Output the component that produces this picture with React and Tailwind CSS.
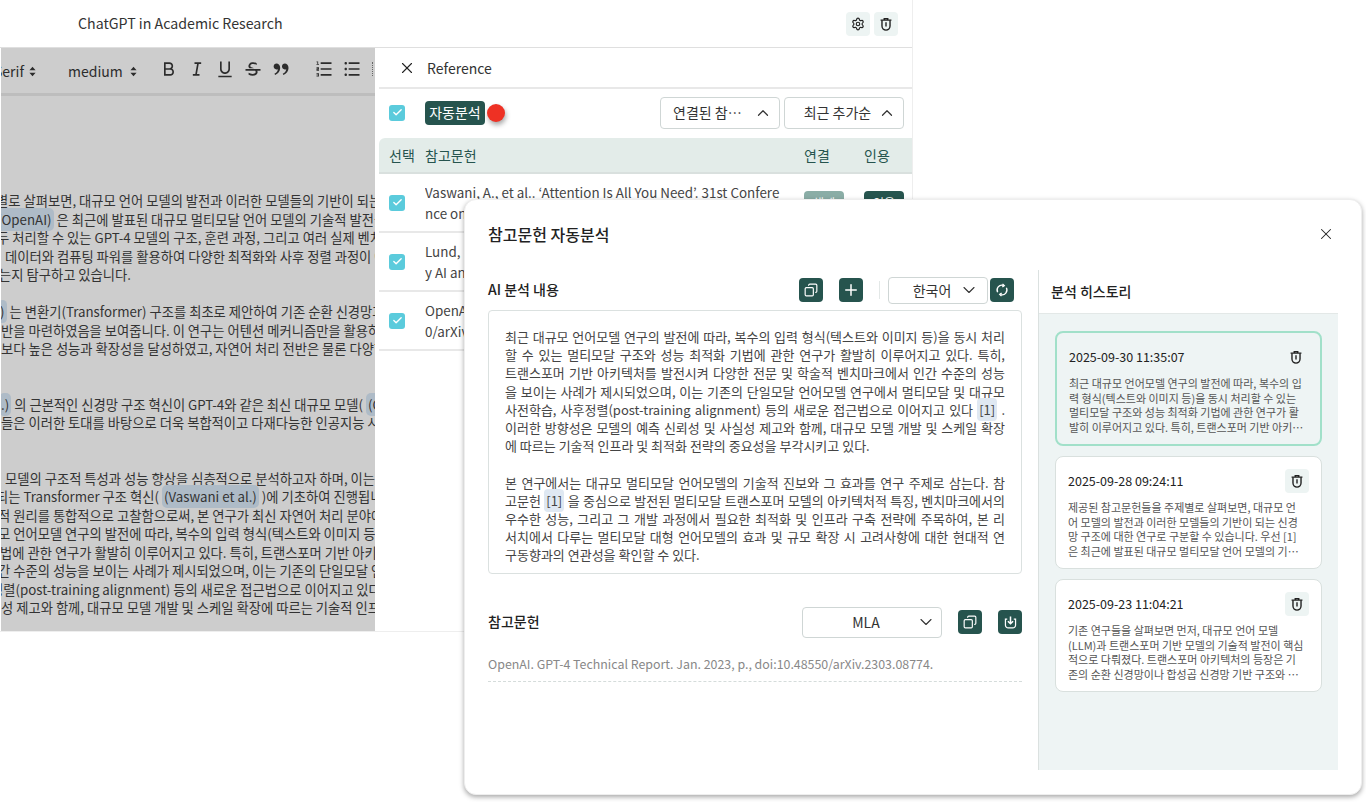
import { Check, ChevronDown, ChevronUp, Copy, Plus, Settings, X } from 'lucide-react';
import {
  RiBold,
  RiDoubleQuotesR,
  RiItalic,
  RiListOrdered,
  RiListUnordered,
  RiStrikethrough,
  RiUnderline,
} from 'react-icons/ri';

const FONT = "font-['Noto_Sans_CJK_KR','Noto_Sans',sans-serif]";

const ANALYSIS = [
  [
    '최근 대규모 언어모델 연구의 발전에 따라, 복수의 입력 형식(텍스트와 이미지 등)을 동시 처리',
    '할 수 있는 멀티모달 구조와 성능 최적화 기법에 관한 연구가 활발히 이루어지고 있다. 특히,',
    '트랜스포머 기반 아키텍처를 발전시켜 다양한 전문 및 학술적 벤치마크에서 인간 수준의 성능',
    '을 보이는 사례가 제시되었으며, 이는 기존의 단일모달 언어모델 연구에서 멀티모달 및 대규모',
    <>
      사전학습, 사후정렬(post-training alignment) 등의 새로운 접근법으로 이어지고 있다 <Cite /> .
    </>,
    '이러한 방향성은 모델의 예측 신뢰성 및 사실성 제고와 함께, 대규모 모델 개발 및 스케일 확장',
  ],
  [
    '본 연구에서는 대규모 멀티모달 언어모델의 기술적 진보와 그 효과를 연구 주제로 삼는다. 참',
    <>
      고문헌 <Cite /> 을 중심으로 발전된 멀티모달 트랜스포머 모델의 아키텍처적 특징, 벤치마크에서의
    </>,
    '우수한 성능, 그리고 그 개발 과정에서 필요한 최적화 및 인프라 구축 전략에 주목하여, 본 리',
    '서치에서 다루는 멀티모달 대형 언어모델의 효과 및 규모 확장 시 고려사항에 대한 현대적 연',
  ],
];

const HISTORY = [
  {
    date: '2025-09-30 11:35:07',
    active: true,
    lines: [
      '최근 대규모 언어모델 연구의 발전에 따라, 복수의 입',
      '력 형식(텍스트와 이미지 등)을 동시 처리할 수 있는',
      '멀티모달 구조와 성능 최적화 기법에 관한 연구가 활',
      '발히 이루어지고 있다. 특히, 트랜스포머 기반 아키…',
    ],
  },
  {
    date: '2025-09-28 09:24:11',
    lines: [
      '제공된 참고문헌들을 주제별로 살펴보면, 대규모 언',
      '어 모델의 발전과 이러한 모델들의 기반이 되는 신경',
      '망 구조에 대한 연구로 구분할 수 있습니다. 우선 [1]',
      '은 최근에 발표된 대규모 멀티모달 언어 모델의 기…',
    ],
  },
  {
    date: '2025-09-23 11:04:21',
    lines: [
      '기존 연구들을 살펴보면 먼저, 대규모 언어 모델',
      '(LLM)과 트랜스포머 기반 모델의 기술적 발전이 핵심',
      '적으로 다뤄졌다. 트랜스포머 아키텍처의 등장은 기',
      '존의 순환 신경망이나 합성곱 신경망 기반 구조와 …',
    ],
  },
];

const REFS = [
  ['Vaswani, A., et al.. ‘Attention Is All You Need’. 31st Confere', 'nce on Neural Information Processing'],
  ['Lund, Brady D., et al.. ‘ChatGPT and a New Academic Realit', 'y AI and Libraries'],
  ['OpenAI. GPT-4 Technical Report. Jan. 2023, p., doi:10.4855', '0/arXiv.2303.08774'],
];

function Cite() {
  return <span className="rounded-sm bg-[#dfe8f2] px-[2px] py-[2px]">[1]</span>;
}

function Chip({ children }) {
  return <span className="rounded-[5px] bg-[#aebbc7] px-[2px] py-[2px]">{children}</span>;
}

function TrashIcon({ className = 'h-[14px] w-[14px]' }) {
  return (
    <svg viewBox="0 0 16 16" fill="none" stroke="currentColor" strokeWidth="1.6" className={className}>
      <path d="M1.8 3.6h12.4M6 3.4V1.8h4v1.6" />
      <path d="M3.4 3.8v6.6a4.6 4.6 0 0 0 9.2 0V3.8" />
      <path d="M8 6v4.8" />
    </svg>
  );
}

function DownloadIcon() {
  return (
    <svg viewBox="0 0 16 16" fill="none" stroke="currentColor" strokeWidth="1.3" className="h-[15px] w-[15px]">
      <path d="M8 1.5v7.5M5.2 6.6 8 9.4l2.8-2.8" strokeWidth="1.6" />
      <path d="M4.5 4.5H2.6v6.3a3 3 0 0 0 3 3h4.8a3 3 0 0 0 3-3V4.5h-1.9" />
    </svg>
  );
}

function RefreshIcon() {
  return (
    <svg viewBox="0 0 16 16" fill="none" stroke="currentColor" strokeWidth="1.5" className="h-[14px] w-[14px]">
      <path d="M3 10.5A5.5 5.5 0 0 1 9.5 2.7" />
      <path d="M13 5.5a5.5 5.5 0 0 1-6.5 7.8" />
      <path d="M8.6 1 10.6 3 8.4 4.6M7.4 15l-2-2 2.2-1.6" />
    </svg>
  );
}

function SortCaret() {
  return (
    <svg viewBox="0 0 8 12" fill="currentColor" className="h-[11px] w-[7px]">
      <path d="M4 0.5 7.5 4.6H.5zM4 11.5.5 7.4h7z" />
    </svg>
  );
}

function DarkButton({ children }) {
  return (
    <button className="flex h-[24px] w-[24px] items-center justify-center rounded-[4px] bg-[#26544e] text-white">
      {children}
    </button>
  );
}

function LightButton({ children }) {
  return (
    <button className="flex h-[24px] w-[24px] items-center justify-center rounded-[4px] bg-[#edf4f3] text-[#222]">
      {children}
    </button>
  );
}

function CheckBox() {
  return (
    <span className="flex h-[16px] w-[16px] items-center justify-center rounded-[3px] bg-[#5bcbdc] text-white">
      <Check size={11} strokeWidth={3} />
    </span>
  );
}

function SelectBox({ label, className, up }) {
  return (
    <div className={`flex items-center rounded-[4px] border border-[#cfd6d5] bg-white text-[#333] ${className}`}>
      <span className="flex-1 truncate text-center">{label}</span>
      {up ? <ChevronUp size={18} strokeWidth={1.6} /> : <ChevronDown size={20} strokeWidth={1.3} />}
    </div>
  );
}

function Line({ offset, children }) {
  return <div className={`whitespace-nowrap ${offset}`}>{children}</div>;
}

function Editor() {
  return (
    <div className="ml-px h-full w-[374px] shrink-0 overflow-hidden bg-[#cdcdcd]">
      <div className="flex h-[48px] items-center border-b-[3px] border-[#bdbdbd] text-[14px] text-[#2c2c2c]">
        <div className="ml-[-7px] flex w-[44px] shrink-0 items-center gap-[5px] pt-[2px]">
          <span>Serif</span>
          <SortCaret />
        </div>
        <div className="ml-[30px] flex shrink-0 items-center gap-[7px] pt-[2px]">
          <span>medium</span>
          <SortCaret />
        </div>
        <div className="ml-[22px] mb-[4px] flex items-center gap-[8px]">
          <RiBold size={20} />
          <RiItalic size={20} />
          <RiUnderline size={20} />
          <RiStrikethrough size={20} />
          <RiDoubleQuotesR size={20} />
          <RiListOrdered size={20} className="ml-[15px]" />
          <RiListUnordered size={20} />
          <span className="ml-[2px] h-[14px] border-l border-dotted border-[#666]" />
        </div>
      </div>
      <div className="pt-[96px] text-[13.3px] leading-[18.5px] text-[#333]">
        <Line offset="ml-[-5px]">별로 살펴보면, 대규모 언어 모델의 발전과 이러한 모델들의 기반이 되는 신경망</Line>
        <Line offset="ml-[-6px]">
          <Chip>(OpenAI)</Chip> 은 최근에 발표된 대규모 멀티모달 언어 모델의 기술적 발전을
        </Line>
        <Line offset="ml-[-4px]">두 처리할 수 있는 GPT-4 모델의 구조, 훈련 과정, 그리고 여러 실제 벤치마크</Line>
        <Line offset="ml-[4px]">데이터와 컴퓨팅 파워를 활용하여 다양한 최적화와 사후 정렬 과정이 어떻게</Line>
        <Line offset="ml-[-2px]">는지 탐구하고 있습니다.</Line>
        <div className="h-[18.5px]" />
        <Line offset="ml-[-3px]">
          <Chip>)</Chip> 는 변환기(Transformer) 구조를 최초로 제안하여 기존 순환 신경망과
        </Line>
        <Line offset="ml-[0px]">반을 마련하였음을 보여줍니다. 이 연구는 어텐션 메커니즘만을 활용하여</Line>
        <Line offset="ml-[0px]">보다 높은 성능과 확장성을 달성하였고, 자연어 처리 전반은 물론 다양한</Line>
        <div className="h-[37px]" />
        <Line offset="ml-[-2px]">
          <Chip>.)</Chip> 의 근본적인 신경망 구조 혁신이 GPT-4와 같은 최신 대규모 모델( <Chip>(OpenAI)</Chip>
        </Line>
        <Line offset="ml-[0px]">들은 이러한 토대를 바탕으로 더욱 복합적이고 다재다능한 인공지능 시스템</Line>
        <div className="h-[37px]" />
        <Line offset="ml-[4px]">모델의 구조적 특성과 성능 향상을 심층적으로 분석하고자 하며, 이는</Line>
        <Line offset="ml-[-5px]">
          되는 Transformer 구조 혁신( <Chip>(Vaswani et al.)</Chip> )에 기초하여 진행됩니다
        </Line>
        <Line offset="ml-[-3px]">적 원리를 통합적으로 고찰함으로써, 본 연구가 최신 자연어 처리 분야에</Line>
        <Line offset="ml-[-3px]">모 언어모델 연구의 발전에 따라, 복수의 입력 형식(텍스트와 이미지 등)</Line>
        <Line offset="ml-[-1px]">법에 관한 연구가 활발히 이루어지고 있다. 특히, 트랜스포머 기반 아키텍처</Line>
        <Line offset="ml-[-3px]">간 수준의 성능을 보이는 사례가 제시되었으며, 이는 기존의 단일모달 언어</Line>
        <Line offset="ml-[-10px]">정렬(post-training alignment) 등의 새로운 접근법으로 이어지고 있다</Line>
        <Line offset="ml-[0px]">성 제고와 함께, 대규모 모델 개발 및 스케일 확장에 따르는 기술적 인프라</Line>
      </div>
    </div>
  );
}

function ReferencePanel() {
  return (
    <div className="min-w-0 flex-1 pl-[4px] text-[14px] text-[#333]">
      <div className="flex h-[41px] items-center gap-[11px] border-b-2 border-[#e8e8e8] pl-[19px]">
        <X size={18} strokeWidth={1.5} className="text-[#222]" />
        <span className="pt-[2px]">Reference</span>
      </div>
      <div className="flex h-[49px] items-center pb-[2px] pl-[10px] pr-[8px]">
        <CheckBox />
        <span className="ml-[20px] flex h-[24px] w-[60px] items-center justify-center rounded-[4px] bg-[#26544e] text-white">
          자동분석
        </span>
        <span className="ml-[2px] h-[18px] w-[18px] rounded-full bg-[#ee3124] shadow-[1px_3px_5px_rgba(0,0,0,0.35)]" />
        <div className="ml-auto flex gap-[4px]">
          <SelectBox label="연결된 참고문헌" up className="h-[32px] w-[120px] pl-[12px] pr-[7px]" />
          <SelectBox label="최근 추가순" up className="h-[32px] w-[120px] pl-[12px] pr-[7px]" />
        </div>
      </div>
      <div className="flex h-[36px] items-center rounded-tl-[6px] border-b-2 border-[#d9e0de] bg-[#e3ece9] pl-[10px] text-[#26544e]">
        <span className="w-[36px]">선택</span>
        <span className="flex-1">참고문헌</span>
        <span className="w-[60px]">연결</span>
        <span className="w-[48px]">인용</span>
      </div>
      {REFS.map((ref) => (
        <div key={ref[0]} className="flex h-[59px] items-center border-b-2 border-[#e8e8e8] pl-[10px]">
          <CheckBox />
          <div className="ml-[20px] w-[379px] overflow-hidden whitespace-nowrap text-[13.4px] leading-[21px] text-[#444]">
            <div>{ref[0]}</div>
            <div>{ref[1]}</div>
          </div>
          <span className="flex h-[24px] w-[40px] items-center justify-center rounded-[4px] bg-[#8aada6] text-[12px] text-white">
            해제
          </span>
          <span className="ml-[20px] flex h-[24px] w-[40px] items-center justify-center rounded-[4px] bg-[#26544e] text-[12px] text-white">
            인용
          </span>
        </div>
      ))}
    </div>
  );
}

function HistoryCard({ item }) {
  return (
    <div
      className={`rounded-[8px] px-[12px] pt-[12px] ${
        item.active ? 'h-[115px] border-2 border-[#a1e0c9] bg-[#eef4f4]' : 'h-[113px] border border-[#d9e0de] bg-white'
      }`}
    >
      <div className="flex h-[24px] items-center justify-between">
        <span className="text-[12.5px] text-[#222]">{item.date}</span>
        {item.active ? (
          <span className="flex h-[24px] w-[24px] items-center justify-center text-[#222]">
            <TrashIcon />
          </span>
        ) : (
          <LightButton>
            <TrashIcon />
          </LightButton>
        )}
      </div>
      <div className="mt-[7px] whitespace-nowrap text-[11px] leading-[14.7px] text-[#555]">
        {item.lines.map((line) => (
          <div key={line}>{line}</div>
        ))}
      </div>
    </div>
  );
}

function AnalysisModal() {
  return (
    <div className="absolute left-[464px] top-[199px] h-[596px] w-[898px] rounded-[12px] border border-[#eeeeee] bg-white shadow-[0_2px_5px_rgba(0,0,0,0.35)]">
      <div className="flex h-[70px] items-center justify-between pb-[3px] pl-[23px] pr-[26px]">
        <span className="text-[16px] font-medium text-[#222]">참고문헌 자동분석</span>
        <X size={18} strokeWidth={1.4} className="text-[#222]" />
      </div>
      <div className="flex h-[500px]">
        <div className="ml-[23px] w-[534px]">
          <div className="flex h-[40px] items-center text-[14px]">
            <span className="pb-[2px] font-medium text-[#222]">AI 분석 내용</span>
            <div className="ml-auto flex items-center">
              <DarkButton>
                <Copy size={14} className="-scale-x-100" />
              </DarkButton>
              <div className="ml-[16px]">
                <DarkButton>
                  <Plus size={18} />
                </DarkButton>
              </div>
              <div className="ml-[16px] h-[18px] w-px bg-[#e3e8e7]" />
              <SelectBox label="한국어" className="ml-[8px] h-[27px] w-[100px] pl-[16px] pr-[8px]" />
              <div className="mx-[8px] ml-[2px]">
                <DarkButton>
                  <RefreshIcon />
                </DarkButton>
              </div>
            </div>
          </div>
          <div className="h-[264px] rounded-[4px] border border-[#dbe1e0] px-[16px] pt-[17px] text-[13px] leading-[18.2px] text-[#444]">
            {ANALYSIS[0].map((line, i) => (
              <div key={i} className="whitespace-nowrap text-justify [text-align-last:justify]">
                {line}
              </div>
            ))}
            <div>에 따르는 기술적 인프라 및 최적화 전략의 중요성을 부각시키고 있다.</div>
            <div className="h-[18.2px]" />
            {ANALYSIS[1].map((line, i) => (
              <div key={i} className="whitespace-nowrap text-justify [text-align-last:justify]">
                {line}
              </div>
            ))}
            <div>구동향과의 연관성을 확인할 수 있다.</div>
          </div>
          <div className="mt-[32px] flex h-[32px] items-center text-[14px]">
            <span className="pb-[2px] font-medium text-[#222]">참고문헌</span>
            <SelectBox label="MLA" className="ml-auto h-[31px] w-[140px] pl-[13px] pr-[5px]" />
            <div className="ml-[16px]">
              <DarkButton>
                <Copy size={14} className="-scale-x-100" />
              </DarkButton>
            </div>
            <div className="ml-[16px]">
              <DarkButton>
                <DownloadIcon />
              </DarkButton>
            </div>
          </div>
          <div className="mt-[9px] h-[35px] border-b border-dashed border-[#d5dcdb] pt-[8px] text-[12.4px] leading-[18px] text-[#888]">
            OpenAI. GPT-4 Technical Report. Jan. 2023, p., doi:10.48550/arXiv.2303.08774.
          </div>
        </div>
        <div className="ml-[16px] flex w-[300px] flex-col border-l border-[#dbe1e0]">
          <div className="flex h-[44px] shrink-0 items-center border-b border-[#e3e8e7] pl-[12px] text-[14px] font-medium text-[#222]">
            분석 히스토리
          </div>
          <div className="flex flex-1 flex-col gap-[10px] bg-[#eef4f4] pl-[16px] pr-[16px] pt-[17px]">
            {HISTORY.map((item) => (
              <HistoryCard key={item.date} item={item} />
            ))}
          </div>
        </div>
      </div>
    </div>
  );
}

export default function App() {
  return (
    <div className={`relative h-[802px] w-[1366px] overflow-hidden bg-white ${FONT}`}>
      <div className="flex h-[632px] w-[913px] flex-col border-r border-b border-[#eeeeee]">
        <header className="flex h-[48px] shrink-0 items-center border-b border-[#dfdfdf] pl-[78px] pr-[14px]">
          <span className="text-[14.2px] text-[#333]">ChatGPT in Academic Research</span>
          <div className="ml-auto flex gap-[4px]">
            <LightButton>
              <Settings size={14} />
            </LightButton>
            <LightButton>
              <TrashIcon />
            </LightButton>
          </div>
        </header>
        <div className="flex min-h-0 flex-1">
          <Editor />
          <ReferencePanel />
        </div>
      </div>
      <AnalysisModal />
    </div>
  );
}
